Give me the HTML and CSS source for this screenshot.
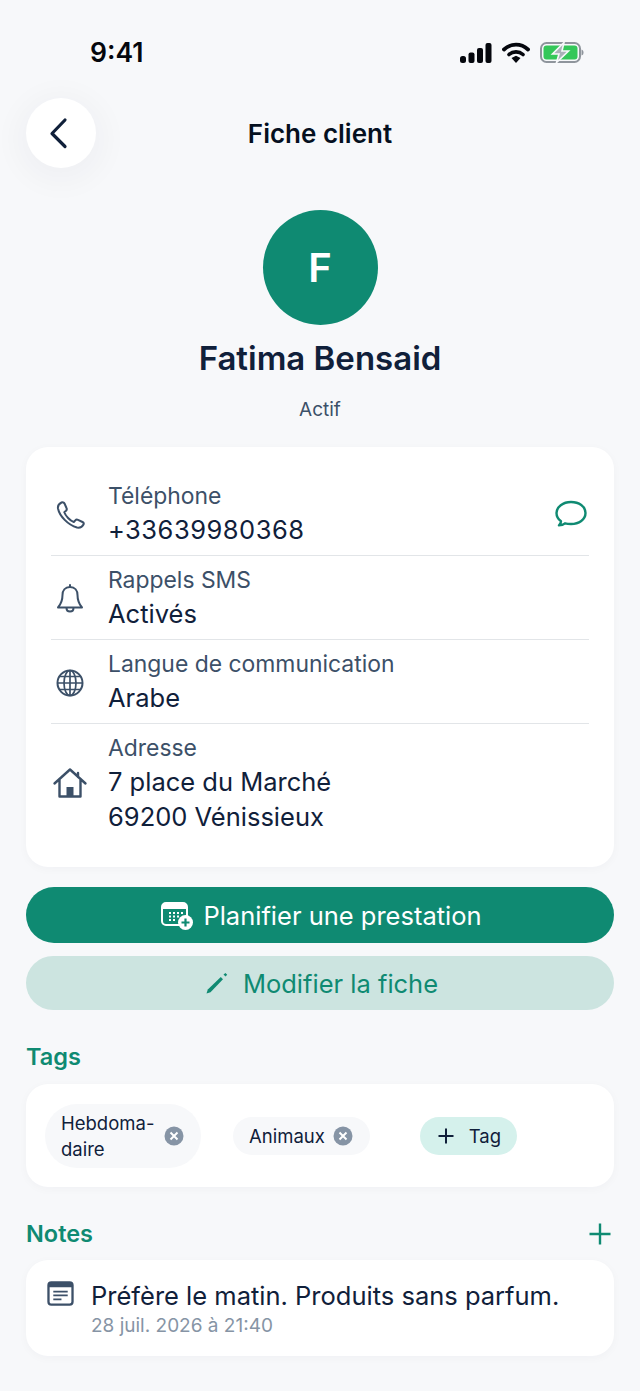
FILE: index.html
```html
<!DOCTYPE html>
<html lang="fr">
<head>
<meta charset="utf-8">
<title>Fiche client</title>
<link rel="stylesheet" href="styles.css">
</head>
<body>
<div class="screen">
  <div class="status">
    <span class="time">9:41</span>
    <div class="status-icons">
      <svg width="32" height="20" viewBox="0 0 32 20"><rect x="0" y="13" width="6" height="7" rx="2.5" fill="#05070d"/><rect x="8.5" y="9.5" width="6" height="10.5" rx="2" fill="#05070d"/><rect x="17" y="5" width="6" height="15" rx="2" fill="#05070d"/><rect x="25.500" y="0" width="6" height="20" rx="2" fill="#05070d"/></svg>
      <svg width="28" height="21" viewBox="0 0 28 21"><path d="M2 7.500C9 1 19 1 26 7.500" fill="none" stroke="#05070d" stroke-width="3.800" stroke-linecap="round"/><path d="M7 12.500C11 9 17 9 21 12.500" fill="none" stroke="#05070d" stroke-width="3.600" stroke-linecap="round"/><path d="M9.500 16L14 13.800L18.500 16L14 21Z" fill="#05070d"/></svg>
      <svg width="44" height="21" viewBox="0 0 44 21"><rect x="1" y="1" width="39" height="19" rx="5.500" fill="none" stroke="#8f959c" stroke-width="2"/><rect x="3.500" y="3.500" width="34" height="14" rx="3" fill="#34c759"/><path d="M41.500 7.500C43 8 43.500 9 43.500 10.500S43 13 41.500 13.500Z" fill="#8f959c"/><path d="M24 0.500L12.500 12H19L16.500 20.500L28.500 9H22Z" fill="#aab1b8" stroke="#f7f8fa" stroke-width="1.600"/></svg>
    </div>
  </div>

  <header class="topbar">
    <button class="back" aria-label="Retour">
      <svg width="22" height="32" viewBox="0 0 22 32"><path d="M17 3L4 16.500L17 29.500" fill="none" stroke="#10203a" stroke-width="3.200" stroke-linecap="round" stroke-linejoin="round"/></svg>
    </button>
    <h1 class="title">Fiche client</h1>
  </header>

  <section class="profile">
    <div class="avatar">F</div>
    <h2 class="name">Fatima Bensaid</h2>
    <p class="state">Actif</p>
  </section>

  <section class="card info">
    <div class="row">
      <svg class="row-icon" width="38" height="38" viewBox="0 0 38 38"><path d="M10.500 6.500C8.500 7.500 6.500 9.500 7 12.500C8.500 20 17 29 26 31.500C29 32 31.500 30.500 32.500 28.500C33 27.500 32.500 26.500 31.500 26L27 23.800C26 23.300 25 23.500 24.300 24.300L22.800 26C19 24.800 14.500 19.800 13.300 16.300L15 14.800C15.800 14 16 13 15.500 12L13.500 7.500C13 6.500 11.500 6 10.500 6.500Z" fill="none" stroke="#3c5068" stroke-width="2" stroke-linejoin="round"/></svg>
      <div class="row-text"><span class="label">Téléphone</span><span class="value value-phone">+33639980368</span></div>
      <svg class="row-action" width="34" height="30" viewBox="0 0 34 30"><path d="M17 3C9 3 2.500 8 2.500 14C2.500 17.500 4.300 20.300 7 22.300C7 23.800 6 25.300 5 26.300C7.500 26.300 9.500 25.600 11 24.300C12.800 24.800 15 25 17 25C25 25 31.500 20.500 31.500 14S25 3 17 3Z" fill="none" stroke="#0f8a72" stroke-width="2.400" stroke-linejoin="round"/></svg>
    </div>
    <div class="row">
      <svg class="row-icon" width="38" height="38" viewBox="0 0 38 38"><path d="M19 7C14 7 11.500 10.500 11.500 15C11.500 21 10 24 7 27.500H31C28 24 26.500 21 26.500 15C26.500 10.500 24 7 19 7ZM19 7V5M15.500 28C15.500 30 17 31.500 19 31.500S22.500 30 22.500 28" fill="none" stroke="#3c5068" stroke-width="2" stroke-linecap="round" stroke-linejoin="round"/></svg>
      <div class="row-text"><span class="label">Rappels SMS</span><span class="value">Activés</span></div>
    </div>
    <div class="row">
      <svg class="row-icon" width="38" height="38" viewBox="0 0 38 38"><g fill="none" stroke="#3c5068" stroke-width="1.700"><circle cx="19" cy="19" r="12.500" stroke-width="2"/><ellipse cx="19" cy="19" rx="6" ry="12.500"/><path d="M19 6.500V31.500M6.500 19H31.500M8.500 12.500H29.500M8.500 25.500H29.500"/></g></svg>
      <div class="row-text"><span class="label">Langue de communication</span><span class="value">Arabe</span></div>
    </div>
    <div class="row row-last">
      <svg class="row-icon" width="38" height="38" viewBox="0 0 38 38"><path d="M3.500 19.500L19 5.500L34.500 19.500M8.500 16V32.500H29.500V16M27 9V13" fill="none" stroke="#3c5068" stroke-width="2.400" stroke-linecap="round" stroke-linejoin="round"/><rect x="15.500" y="23" width="7" height="9.500" fill="#3c5068"/></svg>
      <div class="row-text"><span class="label">Adresse</span><span class="value">7 place du Marché<br>69200 Vénissieux</span></div>
    </div>
  </section>

  <button class="btn btn-primary">
    <svg width="34" height="30" viewBox="0 0 34 30"><rect x="2" y="3" width="25" height="22" rx="4" fill="none" stroke="#fff" stroke-width="2"/><path d="M2 9V6C2 4 4 3 6 3H23C25 3 27 4 27 6V9Z" fill="#fff"/><path d="M9 13H11M13 13H15M17 13H19M21 13H23M9 16.500H11M13 16.500H15M17 16.500H19M9 20H11M13 20H15" stroke="#fff" stroke-width="2"/><circle cx="25.500" cy="22.500" r="7.500" fill="#fff"/><path d="M25.500 18.500V26.500M21.500 22.500H29.500" stroke="#0f8a72" stroke-width="2.200"/></svg>
    <span>Planifier une prestation</span>
  </button>
  <button class="btn btn-soft">
    <svg width="26" height="24" viewBox="0 0 26 24"><path d="M2.500 22.500L3.800 18.500L16.800 6L19 8.200L6.500 21.300Z" fill="#0f8a72"/><path d="M19.500 3.500L21.500 2L23.200 3.700L21.500 5.500Z" fill="#0f8a72"/></svg>
    <span>Modifier la fiche</span>
  </button>

  <h3 class="section-title tags-title">Tags</h3>
  <section class="card tags">
    <span class="chip chip-wide">
      <span class="chip-text">Hebdoma-<br>daire</span>
      <svg class="chip-x" width="20" height="20" viewBox="0 0 20 20"><circle cx="10" cy="10" r="9.500" fill="#8694a5"/><path d="M6.500 6.500L13.500 13.500M13.500 6.500L6.500 13.500" stroke="#fff" stroke-width="2"/></svg>
    </span>
    <span class="chip chip-animal">
      <span class="chip-text">Animaux</span>
      <svg class="chip-x" width="20" height="20" viewBox="0 0 20 20"><circle cx="10" cy="10" r="9.500" fill="#8694a5"/><path d="M6.500 6.500L13.500 13.500M13.500 6.500L6.500 13.500" stroke="#fff" stroke-width="2"/></svg>
    </span>
    <span class="chip chip-add">
      <svg width="16" height="16" viewBox="0 0 16 16"><path d="M8 0.500V15.500M0.500 8H15.500" stroke="#10203a" stroke-width="2"/></svg>
      <span class="chip-text">Tag</span>
    </span>
  </section>

  <div class="notes-head">
    <h3 class="section-title">Notes</h3>
    <svg class="notes-add" width="24" height="24" viewBox="0 0 24 24"><path d="M12 1.500V22.500M1.500 12H22.500" stroke="#0f8a72" stroke-width="2.400"/></svg>
  </div>
  <section class="card note">
    <svg class="note-icon" width="27" height="25" viewBox="0 0 28 26"><rect x="1.500" y="1.500" width="25" height="23" rx="3" fill="none" stroke="#3c5068" stroke-width="2.400"/><path d="M1.500 5C1.500 3 3 1.500 5 1.500H23C25 1.500 26.500 3 26.500 5V6.500H1.500Z" fill="#3c5068"/><path d="M6.500 11H21.500M6.500 15H21.500M6.500 19H15" stroke="#3c5068" stroke-width="1.800"/></svg>
    <div class="note-text">
      <p class="note-body">Préfère le matin. Produits sans parfum.</p>
      <p class="note-date">28 juil. 2026 à 21:40</p>
    </div>
  </section>
</div>
</body>
</html>
```
FILE: styles.css
```css
* { box-sizing: border-box; }
html, body { margin: 0; padding: 0; }
body {
  background: #f7f8fa;
  font-family: Inter, "Liberation Sans", sans-serif;
  color: #10203a;
}
h1, h2, h3, p { margin: 0; }
.screen {
  width: 640px;
  height: 1391px;
  padding: 0 26px;
  overflow: hidden;
}
.status {
  height: 98px;
  margin: 0 4px 0 0;
  padding: 36px 0 0 64px;
  display: flex;
  justify-content: space-between;
  align-items: flex-start;
}
.time {
  font-size: 26.500px;
  line-height: 32px;
  font-weight: 600;
  color: #05070d;
}
.status-icons {
  display: flex;
  align-items: center;
  gap: 10px;
  margin-top: 6px;
  margin-right: 26px;
}
.topbar {
  height: 70px;
  position: relative;
  display: flex;
  align-items: center;
  justify-content: center;
}
.back {
  position: absolute;
  left: 0;
  top: 0;
  width: 70px;
  height: 70px;
  border: 0;
  border-radius: 50%;
  background: #fff;
  padding: 0 4px 0 0;
  display: flex;
  align-items: center;
  justify-content: center;
  box-shadow: 0 6px 28px 10px rgba(20, 30, 50, 0.03);
}
.title {
  font-size: 26px;
  line-height: 32px;
  font-weight: 600;
  color: #05101f;
  padding-top: 2px;
}
.profile {
  margin-top: 42px;
  display: flex;
  flex-direction: column;
  align-items: center;
}
.avatar {
  width: 115px;
  height: 115px;
  border-radius: 50%;
  background: #0f8a72;
  color: #fff;
  font-size: 40px;
  font-weight: 600;
  display: flex;
  align-items: center;
  justify-content: center;
}
.name {
  margin-top: 13px;
  font-size: 33px;
  line-height: 40px;
  font-weight: 600;
  color: #10203a;
}
.state {
  margin-top: 21px;
  font-size: 19px;
  line-height: 22px;
  color: #3c5068;
}
.card {
  background: #fff;
  border-radius: 22px;
  box-shadow: 0 2px 10px rgba(20, 30, 50, 0.03);
}
.info {
  margin-top: 26px;
  height: 420px;
  padding: 25px 25px 0;
}
.row {
  height: 84px;
  display: flex;
  align-items: center;
  border-bottom: 1px solid #e2e5e8;
  padding-top: 3px;
}
.row-last {
  height: auto;
  border-bottom: 0;
  padding-top: 11px;
}
.row-icon {
  flex: none;
  margin: 0 19px 0 0;
}
.row-last .row-icon {
  margin-top: -4px;
}
.row-text {
  flex: 1;
  display: flex;
  flex-direction: column;
}
.label {
  font-size: 22.900px;
  line-height: 26px;
  color: #3c5068;
}
.value {
  margin-top: 3px;
  font-size: 25.500px;
  line-height: 35px;
  color: #10203a;
}
.value-phone {
  letter-spacing: 0.5px;
}
.row-action {
  margin-right: 1px;
  margin-top: -3px;
}
.btn {
  width: 100%;
  border: 0;
  font-family: inherit;
  font-size: 25.500px;
  display: flex;
  align-items: center;
  justify-content: center;
}
.btn-primary {
  margin-top: 20px;
  height: 56px;
  gap: 9px;
  border-radius: 28px;
  background: #0f8a72;
  color: #fff;
  padding-right: 4px;
}
.btn-soft {
  margin-top: 13px;
  height: 54px;
  gap: 13px;
  border-radius: 27px;
  background: #cce4e0;
  color: #0f8a72;
  padding-left: 8px;
}
.section-title {
  font-size: 23.500px;
  line-height: 28px;
  font-weight: 600;
  color: #0f8a72;
}
.tags-title {
  margin-top: 33px;
}
.tags {
  margin-top: 13px;
  height: 103px;
  padding: 0 19px;
  display: flex;
  align-items: center;
}
.chip {
  display: inline-flex;
  align-items: center;
  background: #f7f8fa;
  font-size: 18.500px;
  line-height: 26px;
  color: #10203a;
}
.chip-wide {
  width: 156px;
  height: 64px;
  border-radius: 32px;
  padding: 0 17px 0 16px;
  justify-content: space-between;
}
.chip-animal {
  margin-left: 32px;
  width: 137px;
  height: 38px;
  border-radius: 19px;
  padding: 0 17px 0 16px;
  justify-content: space-between;
}
.chip-add {
  margin-left: 50px;
  width: 97px;
  height: 38px;
  border-radius: 19px;
  background: #d5f1ec;
  padding: 0 16px 0 18px;
  justify-content: space-between;
}
.notes-head {
  margin-top: 33px;
  display: flex;
  align-items: center;
  justify-content: space-between;
  height: 28px;
}
.notes-add {
  margin-right: 2px;
}
.note {
  margin-top: 12px;
  height: 96px;
  padding: 20px 20px 0 21px;
  display: flex;
  align-items: flex-start;
  gap: 17px;
}
.note-icon {
  margin-top: 1px;
  flex: none;
}
.note-text {
  flex: 1;
}
.note-body {
  font-size: 25.500px;
  line-height: 32px;
  color: #10203a;
}
.note-date {
  margin-top: 2px;
  font-size: 19px;
  line-height: 24px;
  color: #8694a5;
}
```
